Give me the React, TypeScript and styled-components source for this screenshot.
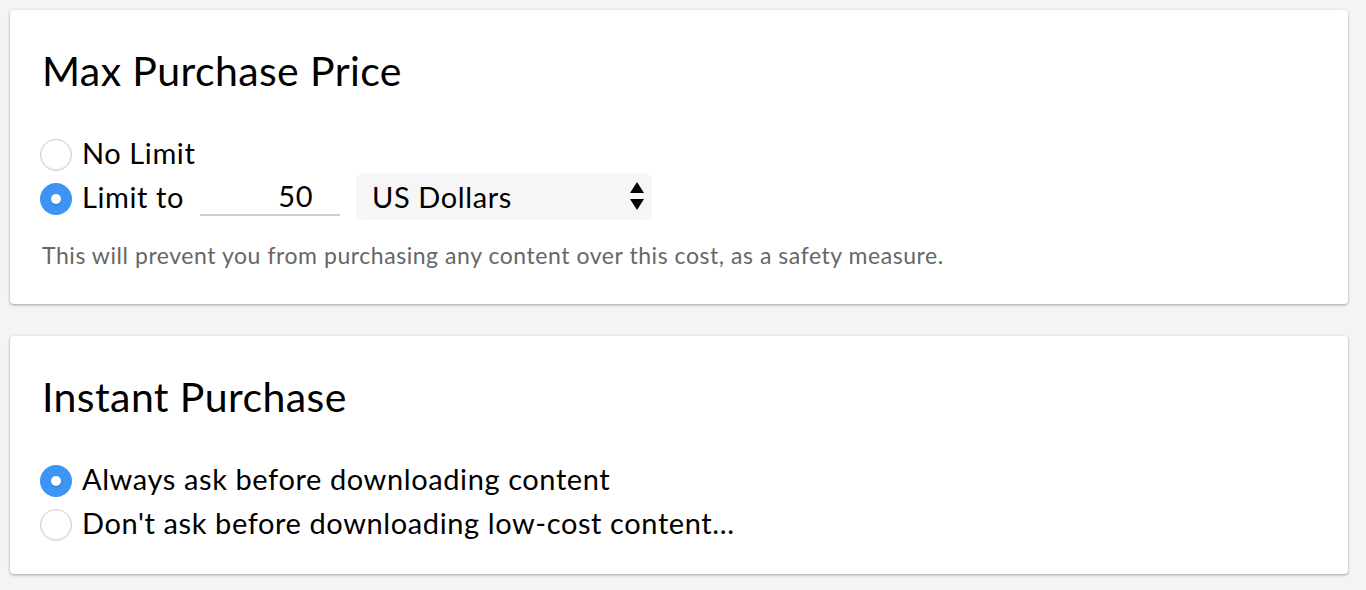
import * as React from 'react';
import styled, { createGlobalStyle } from 'styled-components';

const GlobalStyle = createGlobalStyle`
  html, body {
    margin: 0;
    padding: 0;
    background: #f4f4f4;
  }
  body {
    font-family: 'Lato', 'Liberation Sans', sans-serif;
    color: #000;
  }
`;

const Page = styled.div`
  display: flex;
  flex-direction: column;
  gap: 32px;
  padding: 10px 18px 10px 10px;
`;

const Card = styled.section`
  background: #fff;
  border-radius: 4px;
  box-shadow: 0 1px 3px rgba(0, 0, 0, 0.35);
  padding: 37px 30px 32px 30px;
`;

const Title = styled.h2`
  margin: 0 0 43px 2px;
  font-size: 41px;
  font-weight: 400;
  letter-spacing: 0.4px;
  line-height: 48px;
`;

const Options = styled.div`
  display: flex;
  flex-direction: column;
  gap: 10px;
`;

const Row = styled.label`
  display: flex;
  align-items: center;
  height: 34px;
  font-size: 29px;
  letter-spacing: 0.6px;
`;

const Text = styled.span`
  padding-bottom: 6px;
`;

const Radio = styled.span<{ checked?: boolean }>`
  box-sizing: border-box;
  width: 32px;
  height: 32px;
  margin-right: 10px;
  border-radius: 50%;
  flex: none;
  display: flex;
  align-items: center;
  justify-content: center;
  background: ${(p) => (p.checked ? '#3c94f5' : '#fff')};
  border: ${(p) => (p.checked ? 'none' : '1px solid #cbcbcb')};
  box-shadow: ${(p) =>
    p.checked ? 'none' : 'inset 0 -1px 2px rgba(0,0,0,0.08)'};
  &::after {
    content: '';
    display: ${(p) => (p.checked ? 'block' : 'none')};
    width: 10px;
    height: 10px;
    border-radius: 50%;
    background: #fff;
    box-shadow: 0 1px 1px rgba(0, 0, 0, 0.2);
  }
`;

const AmountInput = styled.div`
  box-sizing: border-box;
  width: 140px;
  height: 34px;
  margin-left: 16px;
  padding-right: 27px;
  text-align: right;
  line-height: 28px;
  border-bottom: 2px solid #cfcfcf;
`;

const Select = styled.div`
  position: relative;
  box-sizing: border-box;
  width: 296px;
  height: 47px;
  margin: -5px 0 0 16px;
  padding: 0 0 0 16px;
  background: #f6f6f6;
  border-radius: 7px;
  display: flex;
  align-items: center;
`;

const Arrows = styled.svg`
  position: absolute;
  right: 7px;
  top: 9px;
`;

const Note = styled.p`
  margin: 25px 0 3px 2px;
  font-size: 23px;
  letter-spacing: 0.55px;
  color: #666;
`;

export default function App() {
  return (
    <>
      <GlobalStyle />
      <Page>
        <Card>
          <Title>Max Purchase Price</Title>
          <Options>
            <Row>
              <Radio />
              <Text>No Limit</Text>
            </Row>
            <Row>
              <Radio checked />
              <Text>Limit to</Text>
              <AmountInput>50</AmountInput>
              <Select>
                US Dollars
                <Arrows width="16" height="30" viewBox="0 0 16 30">
                  <path d="M8 0 L15 11 L1 11 Z" fill="#000" />
                  <path d="M1 17 L15 17 L8 28 Z" fill="#000" />
                </Arrows>
              </Select>
            </Row>
          </Options>
          <Note>
            This will prevent you from purchasing any content over this cost, as a safety measure.
          </Note>
        </Card>
        <Card>
          <Title>Instant Purchase</Title>
          <Options>
            <Row>
              <Radio checked />
              <Text>Always ask before downloading content</Text>
            </Row>
            <Row>
              <Radio />
              <Text>Don't ask before downloading low-cost content...</Text>
            </Row>
          </Options>
        </Card>
      </Page>
    </>
  );
}
